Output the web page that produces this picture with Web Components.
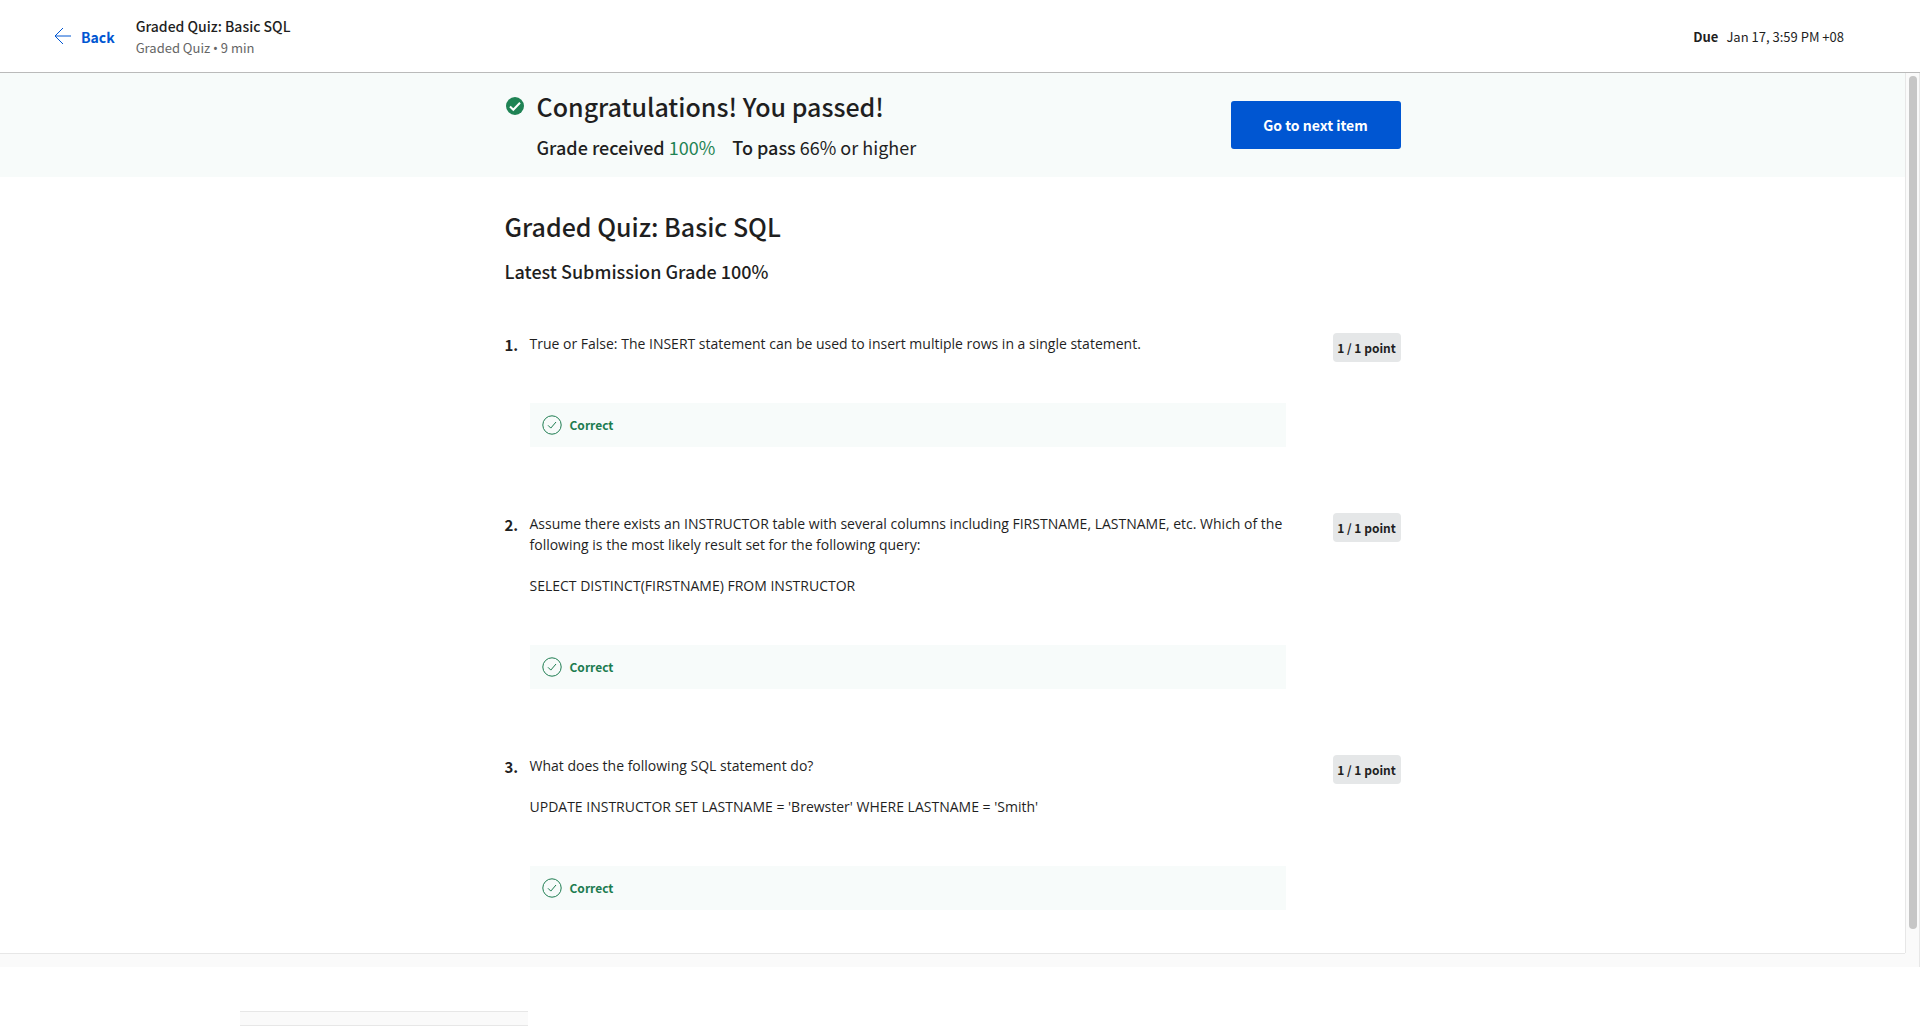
<!DOCTYPE html>
<html lang="en">
<head>
<meta charset="utf-8">
<title>Graded Quiz: Basic SQL</title>
<style>
  html, body { margin: 0; height: 100%; }
  body {
    background: #fff;
    color: #1f1f1f;
    font: 14px/20px "Noto Sans CJK SC", "Noto Sans", sans-serif;
    --blue: #0056d2;
    --green: #1d7c50;
    --tint: #f7fbfa;
    --read: "Open Sans", "Noto Sans", sans-serif;
  }
  .dot { font-family: "Noto Sans", sans-serif; }
</style>
</head>
<body>
<quiz-page>
  <quiz-header slot="header" href="#course">
    <span slot="title">Graded Quiz: Basic SQL</span>
    <span slot="meta">Graded Quiz <span class="dot">•</span> 9 min</span>
    <span slot="due">Jan 17, 3:59 PM +08</span>
  </quiz-header>
  <result-banner>
    <span slot="title">Congratulations! You passed!</span>
    <span slot="grade">100%</span>
    <span slot="pass">66% or higher</span>
    <span slot="action">Go to next item</span>
  </result-banner>
  <quiz-body>
    <span slot="title">Graded Quiz: Basic SQL</span>
    <span slot="subtitle">Latest Submission Grade 100%</span>
    <quiz-question number="1." points="1 / 1 point">
      <quiz-text>True or False: The INSERT statement can be used to insert multiple rows in a single statement.</quiz-text>
    </quiz-question>
    <quiz-question number="2." points="1 / 1 point">
      <quiz-text>Assume there exists an INSTRUCTOR table with several columns including FIRSTNAME, LASTNAME, etc. Which of the following is the most likely result set for the following query:</quiz-text>
      <quiz-text>SELECT DISTINCT(FIRSTNAME) FROM INSTRUCTOR</quiz-text>
    </quiz-question>
    <quiz-question number="3." points="1 / 1 point">
      <quiz-text>What does the following SQL statement do?</quiz-text>
      <quiz-text>UPDATE INSTRUCTOR SET LASTNAME = 'Brewster' WHERE LASTNAME = 'Smith'</quiz-text>
    </quiz-question>
  </quiz-body>
</quiz-page>
<script>
function define(name, html) {
  const template = document.createElement('template');
  template.innerHTML = html;
  customElements.define(name, class extends HTMLElement {
    constructor() {
      super();
      this.attachShadow({ mode: 'open' }).append(template.content.cloneNode(true));
    }
    connectedCallback() {
      this.shadowRoot.querySelectorAll('[data-text]').forEach(n => {
        n.textContent = this.getAttribute(n.dataset.text) || '';
      });
      this.shadowRoot.querySelectorAll('[data-href]').forEach(n => {
        n.setAttribute('href', this.getAttribute(n.dataset.href) || '#');
      });
    }
  });
}

define('quiz-page', `
  <style>
    :host { display: flex; flex-direction: column; height: 100vh; overflow: hidden; }
    .frame { flex: 1; min-height: 0; display: grid; grid-template-columns: 1fr 15px; grid-template-rows: 1fr 14px; background: #fafafa; }
    .view { overflow: hidden; min-height: 0; background: #fff; }
    .track { box-sizing: border-box; border: 1px solid #e7e7e7; border-width: 0 1px 0 1px; padding: 3px 2px 24px 3px; display: flex; }
    .thumb { flex: 1; border-radius: 4px; background: #c6c6c6; }
    .bottom { border-top: 1px solid #e7e7e7; }
    .corner { border-right: 1px solid #e7e7e7; }
    .foot { flex: none; height: 59px; box-sizing: border-box; padding: 44px 0 0 240px; }
    .stub { width: 288px; height: 15px; box-sizing: border-box; border: 1px solid #e7e7e7; border-width: 1px 0; background: #fafafa; }
  </style>
  <slot name="header"></slot>
  <div class="frame">
    <div class="view"><slot></slot></div>
    <div class="track"><div class="thumb"></div></div>
    <div class="bottom"></div>
    <div class="corner"></div>
  </div>
  <div class="foot"><div class="stub"></div></div>
`);

define('quiz-header', `
  <style>
    :host { display: flex; flex: none; align-items: center; box-sizing: border-box; height: 73px; padding: 0 76px 0 54px; border-bottom: 1px solid #bababa; }
    a { display: flex; align-items: center; gap: 9px; color: var(--blue); font-weight: 700; text-decoration: none; }
    a span, .names, .due { padding-top: 2px; }
    .names { flex: 1; margin-left: 21px; }
    .title { font-weight: 500; line-height: 22px; }
    .meta, .due { font-size: 13px; }
    .meta { color: #666; line-height: 22px; }
    .due { display: flex; gap: 8px; }
  </style>
  <a data-href="href">
    <svg width="18" height="18" viewBox="0 0 18 18" fill="none" stroke="currentColor"><path d="M17 9H1M9 1 1 9l8 8"/></svg>
    <span>Back</span>
  </a>
  <div class="names">
    <div class="title"><slot name="title"></slot></div>
    <div class="meta"><slot name="meta"></slot></div>
  </div>
  <div class="due"><b>Due</b><slot name="due"></slot></div>
`);

define('result-banner', `
  <style>
    :host { display: block; background: var(--tint); }
    .row { display: flex; align-items: center; width: 896px; height: 104px; margin: 0 auto; }
    .text { flex: 1; display: grid; grid-template-columns: 32px 1fr; align-items: center; padding-top: 3px; }
    h1 { margin: 0; font-size: 25px; font-weight: 500; line-height: 36px; }
    p { grid-column: 2; display: flex; gap: 17px; margin: 0; padding-top: 5px; font-size: 18px; line-height: 36px; }
    b { font-weight: 500; }
    .grade { color: #1f8354; }
    button { width: 170px; height: 48px; border: 0; border-radius: 3px; background: var(--blue); color: #fff; font: 700 14px/20px "Noto Sans CJK SC", "Noto Sans", sans-serif; }
  </style>
  <div class="row">
    <div class="text">
      <svg width="20" height="20" viewBox="0 0 20 20"><circle cx="10" cy="10" r="9" fill="#1f8354"/><path d="m5 10.500 3.300 3.300 6.700-7" fill="none" stroke="#fff" stroke-width="2"/></svg>
      <h1><slot name="title"></slot></h1>
      <p><span><b>Grade received</b> <span class="grade"><slot name="grade"></slot></span></span><span><b>To pass</b> <slot name="pass"></slot></span></p>
    </div>
    <button type="button"><slot name="action"></slot></button>
  </div>
`);

define('quiz-body', `
  <style>
    :host { display: block; width: 896px; margin: 0 auto; padding-top: 31px; }
    h2 { margin: 0; font-size: 25px; font-weight: 500; line-height: 36px; }
    h3 { margin: 0 0 48px; padding-top: 13px; font-size: 18px; font-weight: 500; line-height: 28px; }
  </style>
  <h2><slot name="title"></slot></h2>
  <h3><slot name="subtitle"></slot></h3>
  <slot></slot>
`);

define('quiz-text', `
  <style>:host { display: block; margin-bottom: 20px; font: 14px/21px var(--read); }</style>
  <slot></slot>
`);

define('quiz-question', `
  <style>
    :host { display: grid; grid-template-columns: 25px 756px 1fr; align-items: start; margin-bottom: 66px; }
    .number { font-size: 15px; font-weight: 700; line-height: 24px; }
    .badge { justify-self: end; width: 68px; box-sizing: border-box; border-radius: 4px; background: #e5e7e8; font-size: 12px; font-weight: 700; line-height: 29px; text-align: center; }
    .feedback { padding-top: 29px; }
  </style>
  <div class="number" data-text="number"></div>
  <div>
    <slot></slot>
    <div class="feedback"><answer-status></answer-status></div>
  </div>
  <div class="badge" data-text="points"></div>
`);

define('answer-status', `
  <style>
    :host { display: flex; align-items: center; gap: 8px; height: 44px; padding-left: 12px; background: var(--tint); color: var(--green); font-size: 12px; font-weight: 700; }
  </style>
  <svg width="20" height="20" viewBox="0 0 20 20" fill="none" stroke="currentColor"><circle cx="10" cy="10" r="9.200"/><path d="m6 10.300 2.800 2.800L14 7"/></svg>
  <span>Correct</span>
`);
</script>
</body>
</html>
